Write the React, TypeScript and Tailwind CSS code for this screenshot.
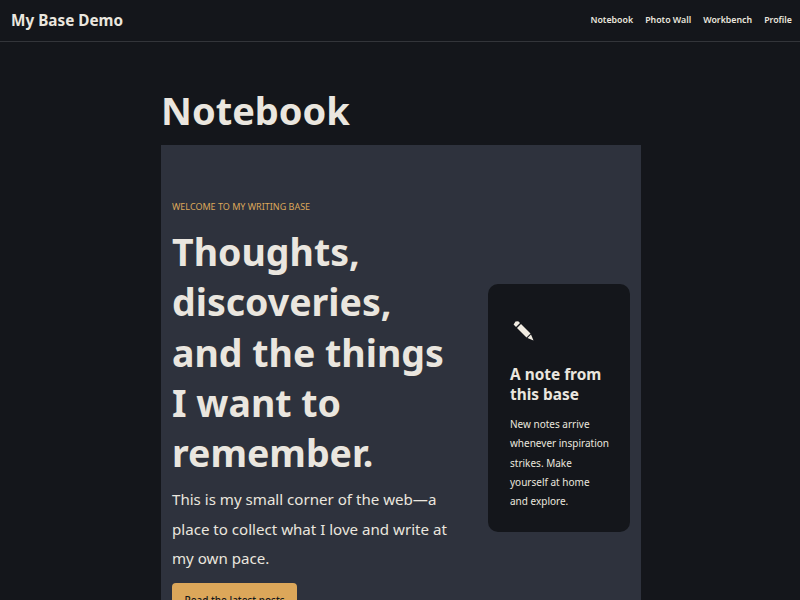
export default function App() {
  const links = ["Notebook", "Photo Wall", "Workbench", "Profile"];
  return (
    <div className="h-[600px] overflow-hidden bg-[#14161b] text-[#eae6df] font-['Noto_Sans',sans-serif]">
      <header className="h-[42px] flex items-center justify-between pl-[11px] pr-[8px] border-b border-[#33353a]">
        <span className="text-[15.3px] font-bold">My Base Demo</span>
        <nav className="flex gap-[12px] text-[8.8px] font-semibold">
          {links.map((l) => (
            <span key={l}>{l}</span>
          ))}
        </nav>
      </header>
      <main className="w-[480px] ml-[161px]">
        <h1 className="text-[38px] font-bold leading-[50px] pt-[43px] h-[103px]">Notebook</h1>
        <section className="bg-[#2e323d] h-[460px] flex pl-[11px] pr-[11px] pt-[55px] gap-[27px]">
          <div className="w-[289px] shrink-0">
            <p className="text-[9px] text-[#dca75a] uppercase leading-[14px]">Welcome to my writing base</p>
            <h2 className="text-[37.5px] font-bold leading-[50.25px] mt-[13px] w-[285px]">
              Thoughts, discoveries, and the things I want to remember.
            </h2>
            <p className="text-[15.1px] leading-[29.5px] mt-[7px] w-[285px]">
              This is my small corner of the web—a place to collect what I love and write at my own pace.
            </p>
            <button className="mt-[9px] h-[36px] w-[125px] bg-[#dca75a] rounded-[4px] text-[#14161b] text-[10px] font-medium">
              Read the latest posts
            </button>
          </div>
          <aside className="w-[142px] h-[248px] mt-[84px] bg-[#14161b] rounded-[10px] pl-[22px] pr-[20px] pt-[36px]">
            <svg width="22" height="22" viewBox="0 0 22 22" className="ml-[2px]">
              <path d="M3.5 1.5 L6.2 1.2 L8 3 L4 7 L1.6 4.5 Z" fill="#f1ece2" />
              <path d="M5 8 L9 4 L18.5 13.5 L14.5 17.5 Z" fill="#f1ece2" />
              <path d="M15.5 18 L19 14.5 L21.5 20.5 Z" fill="#f1ece2" />
            </svg>
            <h3 className="text-[15.4px] font-bold leading-[20px] mt-[23px]">A note from this base</h3>
            <p className="text-[10px] leading-[19.25px] mt-[10px]">
              New notes arrive whenever inspiration strikes. Make yourself at home and explore.
            </p>
          </aside>
        </section>
      </main>
    </div>
  );
}
